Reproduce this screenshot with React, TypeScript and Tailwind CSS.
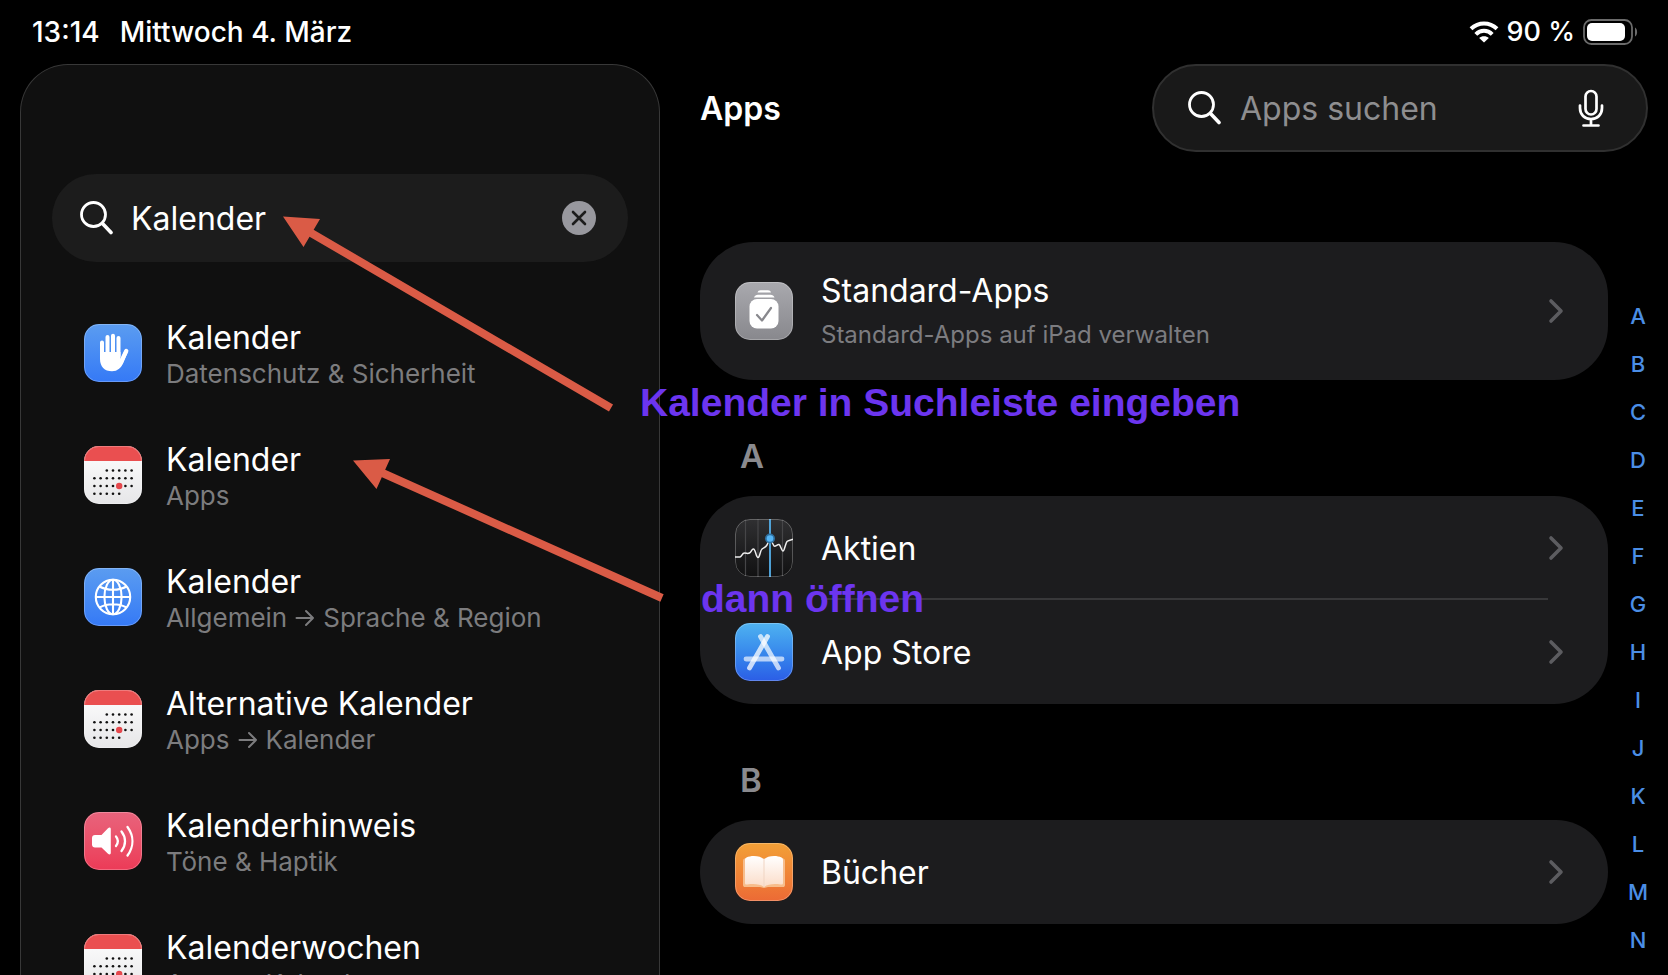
import type { ReactNode } from "react";

type IconName = "hand" | "calendar" | "globe" | "sound";

const results: { icon: IconName; title: string; path: string[] }[] = [
  { icon: "hand", title: "Kalender", path: ["Datenschutz & Sicherheit"] },
  { icon: "calendar", title: "Kalender", path: ["Apps"] },
  { icon: "globe", title: "Kalender", path: ["Allgemein", "Sprache & Region"] },
  { icon: "calendar", title: "Alternative Kalender", path: ["Apps", "Kalender"] },
  { icon: "sound", title: "Kalenderhinweis", path: ["Töne & Haptik"] },
  { icon: "calendar", title: "Kalenderwochen", path: ["Apps", "Kalender"] },
];

const letters = ["A", "B", "C", "D", "E", "F", "G", "H", "I", "J", "K", "L", "M", "N"];

function Tile({ className, children }: { className: string; children: ReactNode }) {
  return (
    <span
      aria-hidden="true"
      className={`relative block size-[58px] shrink-0 overflow-hidden rounded-[15px] bg-linear-to-b after:absolute after:inset-0 after:rounded-[15px] after:border after:border-white/25 ${className}`}
    >
      <svg viewBox="0 0 58 58" className="block size-full">
        {children}
      </svg>
    </span>
  );
}

function HandIcon() {
  return (
    <Tile className="from-[#5b9cf0] to-[#3579f6]">
      <g stroke="#fff" strokeWidth="4" strokeLinecap="round" strokeLinejoin="round">
        <path d="M18 18.5V34M23.500 13V30M29 11.800V30M34.500 14V32" fill="none" />
        <path d="M42.300 27L37 38" fill="none" strokeWidth="4.200" />
      </g>
      <path
        d="M16 28H36.500V35.500L40.500 26.500 43.600 28.500 39.500 38.500C37.500 43.500 33.500 47.300 28 47.300 20.500 47.300 16 42.500 16 35Z"
        fill="#fff"
      />
    </Tile>
  );
}

function CalendarIcon() {
  const rows = [
    { y: 24.5, from: 2, to: 6 },
    { y: 32.3, from: 0, to: 6 },
    { y: 40, from: 0, to: 6 },
    { y: 47.7, from: 0, to: 4 },
  ];
  return (
    <Tile className="from-white to-[#e6e6e8]">
      <rect width="58" height="15" fill="#ea4f50" />
      {rows.map((row) =>
        Array.from({ length: row.to - row.from + 1 }, (_, i) => (
          <circle key={`${row.y}-${i}`} cx={10.4 + (row.from + i) * 6.2} cy={row.y} r="1.300" fill="#111" />
        )),
      )}
      <circle cx="35.200" cy="40" r="3.200" fill="#e5484d" />
    </Tile>
  );
}

function GlobeIcon() {
  return (
    <Tile className="from-[#5b9cf0] to-[#3579f6]">
      <g fill="none" stroke="#fff" strokeWidth="2.100">
        <circle cx="29" cy="29" r="17.200" />
        <ellipse cx="29" cy="29" rx="8.600" ry="17.200" />
        <path d="M29 11.800V46.200M11.800 29H46.200M15.500 18.500C23 22.800 35 22.800 42.500 18.500M15.500 39.500C23 35.200 35 35.200 42.500 39.500" />
      </g>
    </Tile>
  );
}

function SoundIcon() {
  return (
    <Tile className="from-[#e8637c] to-[#ec3a57]">
      <path
        d="M11 23H17.500L24 16.300C25.300 15 26.800 15.500 26.800 17V41C26.800 42.500 25.300 43 24 41.700L17.500 35.500H11C9.200 35.500 8 34.300 8 32.500V26C8 24.200 9.200 23 11 23Z"
        fill="#fff"
      />
      <g fill="none" stroke="#fff" strokeWidth="2.300" strokeLinecap="round">
        <path d="M32 24.500C34.400 27.500 34.400 31 32 34" />
        <path d="M37.500 19.500C42.200 25.500 42.200 33 37.500 39" />
        <path d="M43.500 15C50 24 50 34.500 43.500 43.500" />
      </g>
    </Tile>
  );
}

function DefaultAppsIcon() {
  return (
    <Tile className="from-[#a9a9ae] to-[#88888d]">
      <path d="M22.500 10.500C23 9 24 8.200 25.500 8.200H33C34.500 8.200 35.500 9 36 10.500Z" fill="#fff" />
      <path d="M19 15.500C19.800 13.500 21 12.700 23 12.700H35.500C37.500 12.700 38.700 13.500 39.500 15.500Z" fill="#fff" />
      <rect x="14.500" y="17" width="29" height="29.500" rx="7.500" fill="#fff" />
      <path d="M22 33L27 38.500 36 26" fill="none" stroke="#88888d" strokeWidth="2.200" strokeLinecap="round" strokeLinejoin="round" />
    </Tile>
  );
}

function StocksIcon() {
  return (
    <Tile className="from-[#303032] to-[#111112]">
      <path d="M10.500 0V58M23 0V58M47.500 0V58" stroke="#464648" strokeWidth="1.200" />
      <path
        d="M0 38H5C7 37.500 7 34 9.500 34S12.500 35 14.500 34 16.500 30 18.500 30 21 38.500 23 38.500 25 31.500 27 30 30.500 28.500 32 26L35 19.500 39 27C40.500 28 42.500 25 44 25.500S46.500 32 48 32 50.500 24 52 22.500 56 21.500 58 20"
        fill="none"
        stroke="#ededed"
        strokeWidth="1.500"
        strokeLinejoin="round"
      />
      <path d="M35 0V58" stroke="#55b0ea" strokeWidth="1.800" />
      <circle cx="35" cy="19.500" r="5" fill="#2f6f9e" />
      <circle cx="35" cy="19.500" r="3.300" fill="#55b5f5" />
    </Tile>
  );
}

function AppStoreIcon() {
  return (
    <Tile className="from-[#4fb2f0] to-[#2c5de6]">
      <g fill="none" stroke="#fff" strokeWidth="4.800" strokeLinecap="round">
        <path d="M11 36H47" strokeOpacity="0.650" />
        <path d="M25.500 13.500L43.500 45" strokeOpacity="0.700" />
        <path d="M32.500 13.500L14.500 45" strokeOpacity="0.750" />
      </g>
    </Tile>
  );
}

function BooksIcon() {
  return (
    <Tile className="from-[#f2a037] to-[#ec6a35]">
      <defs>
        <linearGradient id="page" x1="0" y1="0" x2="0" y2="1">
          <stop offset="0" stopColor="#fff" />
          <stop offset="1" stopColor="#fbdcc8" />
        </linearGradient>
      </defs>
      <path d="M8 18C8 16 9 15.500 11 15.500H47C49 15.500 50 16 50 18V42C50 43.500 49 44 48 44H33L29 45 25 44H10C9 44 8 43.500 8 42Z" fill="#f7bd8c" />
      <path d="M29 16.500C25.500 12.500 16.500 12 11.500 14.500 10.300 15.100 10 15.700 10 17V40C10 41.500 11 41.800 12.500 41.500 18.500 40.500 25 41 29 44Z" fill="url(#page)" />
      <path d="M29 16.500C32.500 12.500 41.500 12 46.500 14.500 47.700 15.100 48 15.700 48 17V40C48 41.500 47 41.800 45.500 41.500 39.500 40.500 33 41 29 44Z" fill="url(#page)" />
      <path d="M29 16.500V44" stroke="#f0d5c3" strokeWidth="1" />
    </Tile>
  );
}

const tiles: Record<IconName, () => ReactNode> = {
  hand: HandIcon,
  calendar: CalendarIcon,
  globe: GlobeIcon,
  sound: SoundIcon,
};

function SearchIcon() {
  return (
    <svg aria-hidden="true" viewBox="0 0 34 34" className="size-[34px] shrink-0" fill="none" stroke="currentColor" strokeLinecap="round">
      <circle cx="13.500" cy="13.500" r="12" strokeWidth="2.800" />
      <path d="M22.500 22.500L31 31.500" strokeWidth="3.600" />
    </svg>
  );
}

function Chevron() {
  return (
    <svg aria-hidden="true" viewBox="0 0 16 26" className="h-[26px] w-4 shrink-0" fill="none" stroke="#5c5c60" strokeWidth="3.600" strokeLinecap="round" strokeLinejoin="round">
      <path d="M3 3L13 13 3 23" />
    </svg>
  );
}

function Arrow() {
  return (
    <svg role="img" aria-label="dann" viewBox="0 0 20 18" className="h-[18px] w-5" fill="none" stroke="currentColor" strokeWidth="2" strokeLinecap="round" strokeLinejoin="round">
      <path d="M1.500 9H18M11 2L18 9 11 16" />
    </svg>
  );
}

function StatusBar() {
  return (
    <div className="flex h-16 shrink-0 items-center justify-between pr-[30px] pl-8 text-[28px] font-medium">
      <div className="flex gap-5">
        <span>13:14</span>
        <span>Mittwoch 4. März</span>
      </div>
      <div className="flex items-center gap-2">
        <svg aria-hidden="true" viewBox="0 0 30 22" className="h-[22px] w-[30px]" fill="none" stroke="#fff" strokeWidth="4">
          <path d="M2 7.800C9.500 0.600 20.500 0.600 28 7.800M6.800 13.300C11.500 8.600 18.500 8.600 23.200 13.300" />
          <path d="M15 21.500L10.200 17C12.500 14.500 17.500 14.500 19.800 17Z" fill="#fff" stroke="none" />
        </svg>
        <span className="text-[27px]">90 %</span>
        <svg aria-label="Batterie" role="img" viewBox="0 0 55 26" className="h-[26px] w-[55px]">
          <rect x="1" y="1" width="48" height="24" rx="7.500" fill="none" stroke="#6b6b6b" strokeWidth="1.800" />
          <rect x="4" y="4" width="38" height="18" rx="5" fill="#fff" />
          <path d="M52 8.500C54.800 10 54.800 16 52 17.500Z" fill="#6b6b6b" />
        </svg>
      </div>
    </div>
  );
}

function Sidebar() {
  return (
    <aside className="ml-5 flex w-[640px] shrink-0 flex-col overflow-hidden rounded-t-[48px] border border-b-0 border-[#383838] bg-[#101010] px-[31px] pt-[109px]">
      <label className="flex h-[88px] shrink-0 items-center gap-[17px] rounded-full bg-[#1c1c1c] pr-8 pl-7">
        <SearchIcon />
        <input
          type="text"
          aria-label="Einstellungen suchen"
          defaultValue="Kalender"
          className="min-w-0 flex-1 bg-transparent pt-0.5 text-[32px] outline-none"
        />
        <button type="button" aria-label="Text löschen" className="flex size-[34px] items-center justify-center rounded-full bg-[#98989e]">
          <svg aria-hidden="true" viewBox="0 0 16 16" className="size-4" stroke="#1c1c1c" strokeWidth="2.600" strokeLinecap="round">
            <path d="M2 2L14 14M14 2L2 14" />
          </svg>
        </button>
      </label>
      <ul className="flex flex-col gap-[34px] pt-[47px] pl-8">
        {results.map((item, index) => {
          const Icon = tiles[item.icon];
          return (
            <li key={index}>
              <a href="#" className="flex h-[88px] items-center gap-6">
                <Icon />
                <span className="flex flex-col pt-0.5">
                  <span className="text-[32px] leading-10">{item.title}</span>
                  <span className="flex items-center gap-2 text-[26px] leading-8 text-[#7c7c7e]">
                    {item.path.map((part, i) => (
                      <span key={part} className="flex items-center gap-2">
                        {i > 0 && <Arrow />}
                        {part}
                      </span>
                    ))}
                  </span>
                </span>
              </a>
            </li>
          );
        })}
      </ul>
    </aside>
  );
}

function AppRow({ icon, title, divided }: { icon: ReactNode; title: string; divided?: boolean }) {
  return (
    <a href="#" className="flex h-[104px] items-center gap-7 pl-[35px]">
      {icon}
      <span className="relative flex h-full flex-1 items-center justify-between pr-11 text-[32px]">
        <span className="pt-0.5">{title}</span>
        <Chevron />
        {divided && <span className="absolute right-[60px] bottom-0 left-0 h-0.5 bg-[#38383a]" />}
      </span>
    </a>
  );
}

function SectionTitle({ children }: { children: ReactNode }) {
  return <h2 className="mt-14 pl-10 text-[33px] leading-10 font-semibold text-[#8a8a8e]">{children}</h2>;
}

function Content() {
  return (
    <main className="flex min-w-0 flex-1 flex-col pl-10">
      <header className="flex items-center justify-between pr-5">
        <h1 className="pt-0.5 text-[32px] font-semibold">Apps</h1>
        <label className="flex h-[88px] w-[496px] items-center gap-[18px] rounded-full border-2 border-[#303030] bg-[#191919] pr-[42px] pl-[34px]">
          <SearchIcon />
          <input
            type="search"
            aria-label="Apps suchen"
            placeholder="Apps suchen"
            className="min-w-0 flex-1 bg-transparent pt-0.5 text-[32px] outline-none placeholder:text-[#8e8e90]"
          />
          <button type="button" aria-label="Diktieren">
            <svg aria-hidden="true" viewBox="0 0 26 38" className="h-[38px] w-[26px]" fill="none" stroke="#fff" strokeWidth="2.700" strokeLinecap="round">
              <rect x="7.500" y="2" width="11" height="23.500" rx="5.500" />
              <path d="M2 16.500V19C2 25.500 6.500 30 13 30S24 25.500 24 19V16.500M13 30V36M5.500 36.500H20.500" />
            </svg>
          </button>
        </label>
      </header>
      <div className="flex pt-[90px]">
        <div className="min-w-0 flex-1">
          <a href="#" className="flex h-[138px] items-center gap-7 rounded-[54px] bg-[#1c1c1e] pr-11 pl-[35px]">
            <DefaultAppsIcon />
            <span className="flex flex-1 flex-col gap-2">
              <span className="text-[32px] leading-10">Standard-Apps</span>
              <span className="text-[24px] leading-8 text-[#7c7c80]">Standard-Apps auf iPad verwalten</span>
            </span>
            <Chevron />
          </a>
          <SectionTitle>A</SectionTitle>
          <div className="mt-5 rounded-[54px] bg-[#1c1c1e]">
            <AppRow icon={<StocksIcon />} title="Aktien" divided />
            <AppRow icon={<AppStoreIcon />} title="App Store" />
          </div>
          <SectionTitle>B</SectionTitle>
          <div className="mt-5 rounded-[54px] bg-[#1c1c1e]">
            <AppRow icon={<BooksIcon />} title="Bücher" />
          </div>
        </div>
        <nav aria-label="Index" className="flex w-[60px] flex-col pt-[50px] text-center text-[22px] leading-[48px] font-medium text-[#4b8ee6]">
          {letters.map((letter) => (
            <a key={letter} href="#">
              {letter}
            </a>
          ))}
        </nav>
      </div>
    </main>
  );
}

function Annotations() {
  return (
    <div className="pointer-events-none absolute inset-0 font-['Liberation_Sans',Arial,sans-serif] text-[39px] leading-[48px] font-bold text-[#6c35ef]">
      <svg aria-hidden="true" viewBox="0 0 700 640" className="absolute top-0 left-0 h-[640px] w-[700px]" fill="#da5b46" stroke="#da5b46">
        <path d="M306 230L611 408M378 471L662 598" fill="none" strokeWidth="8" />
        <path d="M283 216.500L320 219 303.500 247ZM353 460.500L390 459 376.500 489Z" stroke="none" />
      </svg>
      <p className="absolute top-[379px] left-[640px] whitespace-nowrap">Kalender in Suchleiste eingeben</p>
      <p className="absolute top-[575px] left-[701px] whitespace-nowrap">dann öffnen</p>
    </div>
  );
}

export default function App() {
  return (
    <div className="relative flex h-screen flex-col overflow-hidden bg-black font-[Inter,'Liberation_Sans',sans-serif] text-white">
      <StatusBar />
      <div className="flex min-h-0 flex-1">
        <Sidebar />
        <Content />
      </div>
      <Annotations />
    </div>
  );
}
